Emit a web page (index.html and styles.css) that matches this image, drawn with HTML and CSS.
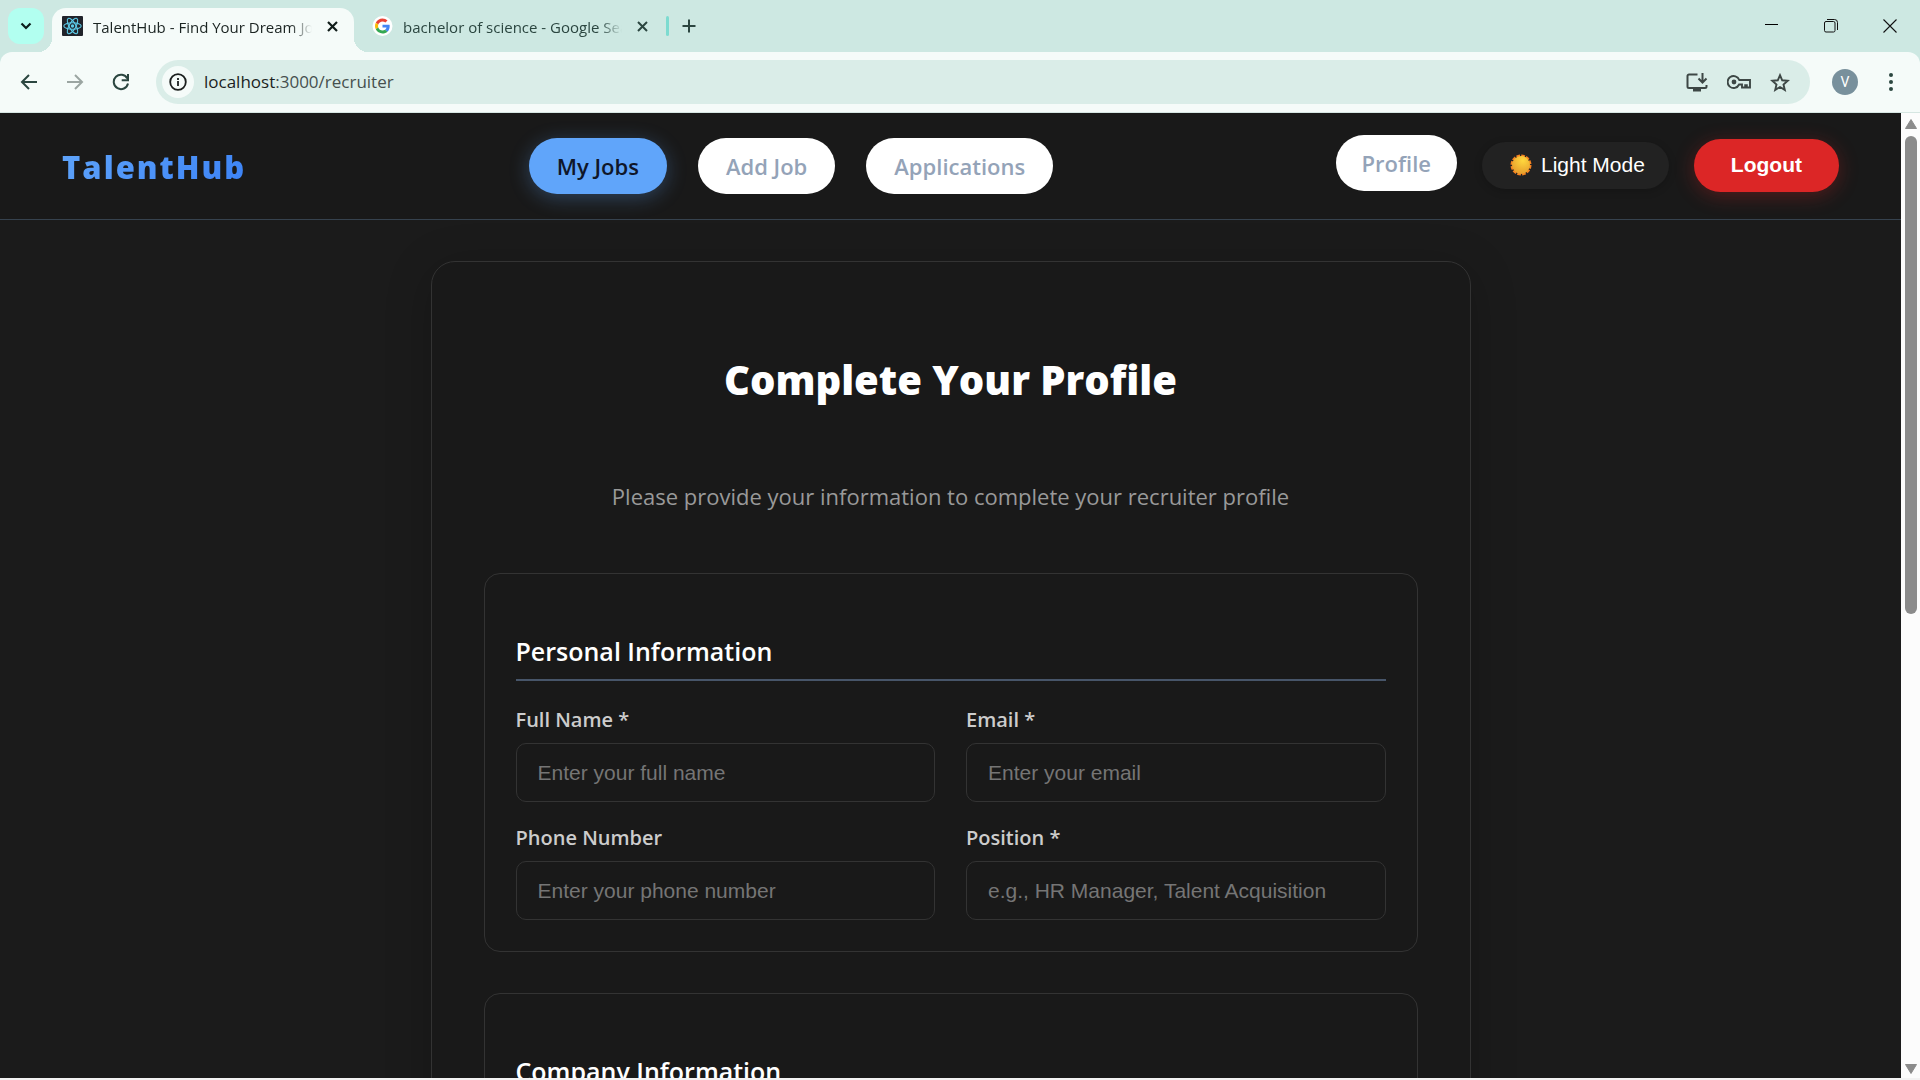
FILE: index.html
```html
<!DOCTYPE html>
<html lang="en">
<head>
<meta charset="utf-8">
<title>TalentHub - Find Your Dream Job</title>
<link rel="stylesheet" href="styles.css">
</head>
<body>
<div class="browser-chrome">
<div class="tabstrip">
  <button class="tab-search" aria-label="Search tabs">
    <svg width="12" height="8" viewBox="0 0 12 8"><path d="M1.5 1.5 6 6l4.500-4.500" fill="none" stroke="#0c1f1b" stroke-width="2.200"/></svg>
  </button>
  <div class="tab tab-active">
    <svg class="favicon" viewBox="0 0 21 20"><rect width="21" height="20" rx="1" fill="#20232a"/><g fill="none" stroke="#5ccbe8" stroke-width="1.100"><ellipse cx="10.500" cy="10" rx="8.700" ry="3.300"/><ellipse cx="10.500" cy="10" rx="8.700" ry="3.300" transform="rotate(60 10.500 10)"/><ellipse cx="10.500" cy="10" rx="8.700" ry="3.300" transform="rotate(120 10.500 10)"/></g><circle cx="10.500" cy="10" r="1.700" fill="#5ccbe8"/></svg>
    <span class="tab-title">TalentHub - Find Your Dream Job</span>
    <button class="icon-btn tab-close" aria-label="Close tab"><svg width="11" height="11" viewBox="0 0 11 11"><path d="M1 1l9 9M10 1l-9 9" stroke="#111d1a" stroke-width="2.200"/></svg></button>
  </div>
  <div class="tab">
    <svg class="favicon" viewBox="0 0 48 48"><circle cx="24" cy="24" r="24" fill="#fff"/><g transform="translate(6 6) scale(.75)"><path fill="#ea4335" d="M24 9.500c3.540 0 6.710 1.220 9.210 3.600l6.850-6.850C35.900 2.380 30.470 0 24 0 14.620 0 6.510 5.380 2.560 13.220l7.980 6.190C12.430 13.720 17.740 9.500 24 9.500z"/><path fill="#4285f4" d="M46.980 24.550c0-1.570-.150-3.090-.380-4.550H24v9.020h12.940c-.580 2.960-2.260 5.480-4.780 7.180l7.730 6c4.510-4.180 7.090-10.360 7.090-17.650z"/><path fill="#fbbc05" d="M10.530 28.590c-.480-1.450-.760-2.990-.760-4.590s.270-3.140.760-4.590l-7.980-6.190C.920 16.460 0 20.120 0 24c0 3.880.920 7.540 2.560 10.780l7.970-6.190z"/><path fill="#34a853" d="M24 48c6.480 0 11.930-2.130 15.890-5.810l-7.730-6c-2.150 1.450-4.920 2.300-8.160 2.300-6.260 0-11.570-4.220-13.470-9.910l-7.980 6.190C6.510 42.620 14.620 48 24 48z"/></g></svg>
    <span class="tab-title">bachelor of science - Google Search</span>
    <button class="icon-btn tab-close" aria-label="Close tab"><svg width="11" height="11" viewBox="0 0 11 11"><path d="M1 1l9 9M10 1l-9 9" stroke="#2b4640" stroke-width="2"/></svg></button>
  </div>
  <span class="tab-divider"></span>
  <button class="icon-btn new-tab" aria-label="New tab"><svg width="14" height="14" viewBox="0 0 14 14"><path d="M7 .5v13M.5 7h13" stroke="#2b4640" stroke-width="2"/></svg></button>
  <div class="window-controls">
    <button class="icon-btn" aria-label="Minimize"><svg width="14" height="14" viewBox="0 0 14 14"><path d="M0 5.500h13" stroke="#000"/></svg></button>
    <button class="icon-btn" aria-label="Restore"><svg width="14" height="14" viewBox="0 0 14 14" fill="none" stroke="#111"><rect x=".5" y="2.500" width="10.500" height="10.500" rx="1.500"/><path d="M3 .5h7.500a3 3 0 0 1 3 3V11"/></svg></button>
    <button class="icon-btn" aria-label="Close"><svg width="14" height="14" viewBox="0 0 14 14"><path d="M.5.5l13 13M13.500.5l-13 13" stroke="#111" stroke-width="1.100"/></svg></button>
  </div>
</div>

<div class="toolbar">
  <div class="history">
    <button class="icon-btn" aria-label="Back"><svg width="18" height="16" viewBox="0 0 18 16"><path d="M17 8H2.500M9 1 2 8l7 7" fill="none" stroke="#2b4640" stroke-width="2"/></svg></button>
    <button class="icon-btn" aria-label="Forward"><svg width="18" height="16" viewBox="0 0 18 16"><path d="M1 8h14.500M9 1l7 7-7 7" fill="none" stroke="#9ba5a2" stroke-width="2"/></svg></button>
    <button class="icon-btn" aria-label="Reload"><svg width="18" height="18" viewBox="0 0 18 18"><path d="M15.300 5.500A7.200 7.200 0 1 0 16 10.500" fill="none" stroke="#2b4640" stroke-width="2"/><path d="M16 1v6.300H9.700" fill="none" stroke="#2b4640" stroke-width="2"/></svg></button>
  </div>
  <div class="omnibox">
    <button class="site-info" aria-label="Site information"><svg width="18" height="18" viewBox="0 0 18 18"><circle cx="9" cy="9" r="7.800" fill="none" stroke="#1b1f1e" stroke-width="1.800"/><path d="M9 8v5M9 5v1.900" stroke="#1b1f1e" stroke-width="1.800"/></svg></button>
    <span class="url"><span class="host">localhost</span>:3000/recruiter</span>
    <div class="omnibox-actions">
      <button class="icon-btn" aria-label="Install"><svg width="22" height="19" viewBox="0 0 22 19"><path d="M11.500 1.500H3a1.500 1.500 0 0 0-1.500 1.500v10.500A1.500 1.500 0 0 0 3 15h16a1.500 1.500 0 0 0 1.500-1.500V12" fill="none" stroke="#3d4745" stroke-width="2"/><path d="M7 15h8v3.500H7z" fill="#3d4745"/><path d="M16.500 0v9M12.500 5.500l4 4 4-4" fill="none" stroke="#3d4745" stroke-width="2"/></svg></button>
      <button class="icon-btn" aria-label="Passwords"><svg width="24" height="14" viewBox="0 0 24 14"><path d="M12.300 5H23v7.500h-3.200v-2.200h-1.600v2.200H15V9.500h-2.900A6 6 0 1 1 12.300 5z" fill="none" stroke="#3d4745" stroke-width="1.900"/><circle cx="7" cy="7" r="2.400" fill="#3d4745"/></svg></button>
      <button class="icon-btn" aria-label="Bookmark"><svg width="20" height="19" viewBox="0 0 20 19"><path d="M10 2.200l2.200 5.100 5.500.500-4.200 3.700 1.300 5.400-4.800-2.900-4.800 2.900 1.300-5.400L2.300 7.800l5.500-.500z" fill="none" stroke="#3d4745" stroke-width="1.900"/></svg></button>
    </div>
  </div>
  <button class="avatar" aria-label="Account">V</button>
  <button class="icon-btn kebab" aria-label="Menu"><svg width="4" height="20" viewBox="0 0 4 20" fill="#2b4640"><circle cx="2" cy="3" r="2"/><circle cx="2" cy="10" r="2"/><circle cx="2" cy="17" r="2"/></svg></button>
</div>
</div>

<div class="viewport">
  <div class="page">
    <header class="site-header">
      <a class="logo" href="#">TalentHub</a>
      <nav class="main-nav">
        <a class="pill pill-active" href="#">My Jobs</a>
        <a class="pill" href="#">Add Job</a>
        <a class="pill" href="#">Applications</a>
      </nav>
      <div class="account">
        <a class="pill profile" href="#">Profile</a>
        <button class="theme-toggle"><svg width="22" height="22" viewBox="0 0 22 22"><defs><radialGradient id="sun" cx=".6" cy=".25" r=".8"><stop offset="0" stop-color="#ffd83d"/><stop offset="1" stop-color="#e59a2c"/></radialGradient></defs><circle cx="11" cy="11" r="9" fill="none" stroke="#f58220" stroke-width="3" stroke-dasharray="3.500 1.212"/><circle cx="11" cy="11" r="9" fill="url(#sun)"/></svg>Light Mode</button>
        <button class="logout">Logout</button>
      </div>
    </header>

    <main class="content">
      <form class="card">
        <h1>Complete Your Profile</h1>
        <p class="subtitle">Please provide your information to complete your recruiter profile</p>
        <section class="panel">
          <h2>Personal Information</h2>
          <div class="fields">
            <div class="field"><label for="name">Full Name *</label><input id="name" type="text" placeholder="Enter your full name"></div>
            <div class="field"><label for="email">Email *</label><input id="email" type="email" placeholder="Enter your email"></div>
            <div class="field"><label for="phone">Phone Number</label><input id="phone" type="tel" placeholder="Enter your phone number"></div>
            <div class="field"><label for="position">Position *</label><input id="position" type="text" placeholder="e.g., HR Manager, Talent Acquisition"></div>
          </div>
        </section>
        <section class="panel">
          <h2>Company Information</h2>
        </section>
      </form>
    </main>
  </div>
  <div class="scrollbar">
    <svg width="12" height="10" viewBox="0 0 12 10"><path d="M6 .5 11.500 9.500H.5z" fill="#8b8b8b" stroke="#8b8b8b" stroke-linejoin="round"/></svg>
    <div class="track"><div class="thumb"></div></div>
    <svg width="12" height="10" viewBox="0 0 12 10"><path d="M.5.5h11L6 9.500z" fill="#8b8b8b" stroke="#8b8b8b" stroke-linejoin="round"/></svg>
  </div>
</div>
</body>
</html>
```
FILE: styles.css
```css
* { box-sizing: border-box; }

body {
  margin: 0;
  height: 100vh;
  display: flex;
  flex-direction: column;
  overflow: hidden;
  padding-bottom: 2px;
  background: #f3f3f3;
  font-family: "Open Sans", "Noto Sans", sans-serif;
}

button { font: inherit; border: 0; padding: 0; background: none; cursor: pointer; }
a { text-decoration: none; }
svg { display: block; flex: none; }

.icon-btn { display: flex; align-items: center; justify-content: center; flex: none; }

.browser-chrome { flex: none; background: #cde8e2; }

/* Tab strip */
.tabstrip {
  display: flex;
  align-items: center;
  height: 52px;
  padding-left: 8px;
}
.tab-search {
  display: flex;
  align-items: center;
  justify-content: center;
  width: 36px;
  height: 36px;
  border-radius: 12px;
  background: #b2fff0;
}
.tab {
  position: relative;
  display: flex;
  align-items: center;
  width: 302px;
  height: 44px;
  margin-top: 8px;
  padding: 0 10px 8px;
  color: #2b4640;
}
.tab-search + .tab { margin-left: 8px; }
.tab-active {
  background: #f5fbf9;
  border-radius: 14px 14px 0 0;
  color: #1b2422;
}
.tab-active::before,
.tab-active::after {
  content: "";
  position: absolute;
  bottom: 0;
  width: 14px;
  height: 14px;
}
.tab-active::before { left: -14px; background: radial-gradient(circle at 0 0, transparent 14px, #f5fbf9 14px); }
.tab-active::after { right: -14px; background: radial-gradient(circle at 100% 0, transparent 14px, #f5fbf9 14px); }
.tab + .tab { padding-left: 18px; width: 312px; }
.favicon { width: 21px; height: 20px; }
.tab-title {
  flex: 1;
  margin-left: 10px;
  padding-top: 2px;
  overflow: hidden;
  white-space: nowrap;
  font-size: 15px;
  line-height: 20px;
  -webkit-mask-image: linear-gradient(90deg, #000 90%, transparent);
  mask-image: linear-gradient(90deg, #000 90%, transparent);
}
.tab-close { width: 24px; height: 24px; margin-left: 8px; }
.tab + .tab .tab-close { margin-right: 2px; }
.tab-divider { width: 3px; height: 20px; border-radius: 2px; background: #7ddbd0; }
.new-tab { width: 28px; height: 28px; margin-left: 6px; }
.window-controls { display: flex; margin: 0 1px 0 auto; }
.window-controls .icon-btn { width: 59px; height: 36px; }

/* Toolbar */
.toolbar {
  display: flex;
  align-items: center;
  height: 61px;
  padding: 0 16px 0 20px;
  border-bottom: 1px solid #d6e6e2;
  border-radius: 12px 12px 0 0;
  background: #f5fbf9;
}
.history { display: flex; gap: 28px; width: 136px; }
.omnibox {
  display: flex;
  align-items: center;
  flex: 1;
  height: 44px;
  padding: 0 20px 0 6px;
  border-radius: 22px;
  background: #daede8;
}
.site-info {
  display: flex;
  align-items: center;
  justify-content: center;
  width: 32px;
  height: 32px;
  border-radius: 50%;
  background: #f5fbf9;
}
.url { margin-left: 10px; font-size: 17px; line-height: 24px; color: #46504e; }
.host { color: #1b1f1e; }
.omnibox-actions { display: flex; align-items: center; gap: 19px; margin-left: auto; }
.avatar {
  width: 26px;
  height: 26px;
  margin-left: 22px;
  border-radius: 50%;
  background: #78909c;
  color: #fff;
  font-family: Roboto, sans-serif;
  font-size: 14px;
  line-height: 26px;
}
.kebab { width: 26px; height: 26px; margin-left: 20px; }

/* Page area */
.viewport { display: flex; flex: 1; min-height: 0; background: #1b1b1b; }
.page { flex: 1; overflow: hidden; }

.site-header {
  display: flex;
  align-items: center;
  justify-content: space-between;
  height: 107px;
  padding: 0 62px;
  border-bottom: 1px solid #36424e;
  background: #191919;
}
.logo {
  padding-top: 2px;
  font-size: 31px;
  font-weight: 800;
  line-height: 44px;
  letter-spacing: 2px;
  color: transparent;
  background: linear-gradient(135deg, #60a5fa, #3b82f6);
  -webkit-background-clip: text;
  background-clip: text;
}
.main-nav { display: flex; gap: 31px; }
.pill {
  padding: 13px 28px;
  border-radius: 28px;
  background: #fff;
  color: #94a3b8;
  font-size: 22px;
  font-weight: 600;
  line-height: 30px;
}
.pill-active {
  background: #60a5fa;
  color: #0f172a;
  box-shadow: 0 4px 20px rgba(96, 165, 250, .3);
}
.account { display: flex; align-items: center; gap: 25px; padding-bottom: 2px; }
.profile { margin-bottom: 4px; padding: 13px 26px; }
.theme-toggle,
.logout { font-family: "Liberation Sans", Arial, sans-serif; font-size: 21px; color: #fff; }
.theme-toggle {
  display: flex;
  align-items: center;
  gap: 9px;
  height: 47px;
  padding: 0 24px 0 28px;
  border-radius: 24px;
  background: #222;
  box-shadow: 0 2px 8px rgba(0, 0, 0, .2);
}
.logout {
  height: 53px;
  padding: 0 37px;
  border-radius: 27px;
  background: #dc2626;
  font-weight: 700;
  box-shadow: 0 4px 20px rgba(220, 38, 38, .3);
}

/* Profile form */
.content { padding: 41px 24px; }
.card {
  display: flex;
  flex-direction: column;
  max-width: 1040px;
  margin: 0 auto;
  padding: 52px;
  border: 1px solid #333;
  border-radius: 24px;
  background: #191919;
  box-shadow: 0 8px 48px rgba(0, 0, 0, .2);
}
h1 {
  margin: 36px 0 0;
  color: #fff;
  font-size: 40px;
  font-weight: 800;
  line-height: 60px;
  text-align: center;
}
.subtitle {
  margin: 69px 0 60px;
  color: #999;
  font-size: 22px;
  line-height: 34px;
  text-align: center;
}
.panel {
  padding: 31px;
  border: 1px solid #333;
  border-radius: 16px;
}
.panel + .panel { min-height: 380px; margin-top: 41px; }
h2 {
  margin: 28px 0 24px;
  padding-bottom: 10px;
  border-bottom: 2px solid #475569;
  color: #fff;
  font-size: 25px;
  font-weight: 600;
  line-height: 36px;
}
.fields { display: grid; grid-template-columns: 1fr 1fr; gap: 21px 31px; }
.field { display: flex; flex-direction: column; gap: 8px; }
.field label { color: #ccc; font-size: 20px; font-weight: 600; line-height: 30px; }
.field input {
  height: 59px;
  padding: 0 21px;
  border: 1px solid #333;
  border-radius: 10px;
  background: #191919;
  color: #fff;
  font-family: "Liberation Sans", Arial, sans-serif;
  font-size: 21px;
}
.field input::placeholder { color: #757575; }

/* Scrollbar */
.scrollbar {
  display: flex;
  flex-direction: column;
  align-items: center;
  width: 19px;
  padding: 6px 0 4px;
  background: #fcfcfc;
}
.track { flex: 1; width: 12px; padding-top: 7px; }
.thumb { height: 51.5%; border-radius: 6px; background: #8b8b8b; }
```
